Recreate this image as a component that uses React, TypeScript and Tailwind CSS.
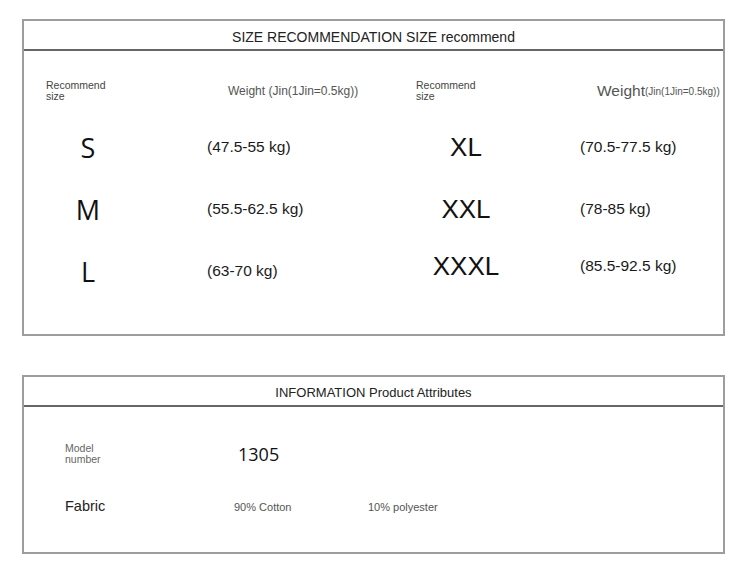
const sans = "font-['Liberation_Sans',Arial,sans-serif]";
const open = "font-['Open_Sans','Noto_Sans',sans-serif]";

const leftRows = [
  { size: 'S', kg: '(47.5-55 kg)', h: 'h-[62px]' },
  { size: 'M', kg: '(55.5-62.5 kg)', h: 'h-[62px]' },
  { size: 'L', kg: '(63-70 kg)', h: 'h-[62px]' },
];

const rightRows = [
  { size: 'XL', kg: '(70.5-77.5 kg)', h: 'h-[62px]' },
  { size: 'XXL', kg: '(78-85 kg)', h: 'h-[62px]' },
  { size: 'XXXL', kg: '(85.5-92.5 kg)', h: 'h-[52px]' },
];

const Label = () => (
  <div className="text-[10.5px] leading-[11px] text-[#444]">
    <div>Recommend</div>
    <div>size</div>
  </div>
);

const App = () => {
  return (
    <div className={`min-h-screen bg-white pt-[19px] pl-[22px] ${sans}`}>
      {/* Size recommendation */}
      <div className="w-[703px] h-[317px] border-2 border-[#9d9d9d] flex flex-col">
        <div className="h-[28px] pt-[5px] flex items-center justify-center text-[14px] text-[#222]">
          SIZE RECOMMENDATION SIZE recommend
        </div>
        <div className="h-[2px] bg-[#666]" />
        <div className="flex pl-[22px]">
          {/* left half */}
          <div className="flex flex-col w-[370px]">
            <div className="flex h-[20px] mt-[30px] items-center">
              <div className="w-[161px]">
                <Label />
              </div>
              <div className="pl-[21px] text-[12px] text-[#555]">Weight (Jin(1Jin=0.5kg))</div>
            </div>
            <div className="mt-[15px] flex flex-col">
              {leftRows.map((r) => (
                <div key={r.size} className={`flex items-center ${r.h}`}>
                  <div className="w-[161px]">
                    <div className={`w-[84px] text-center text-[27px] leading-none text-[#111] ${open}`}>{r.size}</div>
                  </div>
                  <div className="text-[15.5px] text-[#1a1a1a]">{r.kg}</div>
                </div>
              ))}
            </div>
          </div>
          {/* right half */}
          <div className="flex flex-col flex-1">
            <div className="flex h-[20px] mt-[30px] items-center">
              <div className="w-[164px]">
                <Label />
              </div>
              <div className="pl-[17px] flex items-baseline text-[#555]">
                <span className="text-[15.5px]">Weight</span>
                <span className="text-[10px] -translate-y-[1px]">(Jin(1Jin=0.5kg))</span>
              </div>
            </div>
            <div className="mt-[15px] flex flex-col">
              {rightRows.map((r) => (
                <div key={r.size} className={`flex items-center ${r.h}`}>
                  <div className="w-[164px]">
                    <div className="w-[100px] text-center text-[26px] leading-none text-[#111]">{r.size}</div>
                  </div>
                  <div className="text-[15.5px] text-[#1a1a1a]">{r.kg}</div>
                </div>
              ))}
            </div>
          </div>
        </div>
      </div>

      {/* Product attributes */}
      <div className="mt-[39px] w-[703px] h-[179px] border-2 border-[#9d9d9d] flex flex-col">
        <div className="h-[28px] pt-[4px] flex items-center justify-center text-[13px] text-[#222]">
          INFORMATION Product Attributes
        </div>
        <div className="h-[2px] bg-[#666]" />
        <div className="flex flex-col pl-[41px] pt-[30px]">
          <div className="flex items-center h-[34px]">
            <div className="w-[169px] text-[10.5px] leading-[11px] text-[#666]">
              <div>Model</div>
              <div>number</div>
            </div>
            <div className={`pl-[4px] text-[18px] font-medium text-[#111] ${open}`}>1305</div>
          </div>
          <div className="flex items-center h-[38px] mt-[17px]">
            <div className="w-[169px] text-[14.5px] text-[#222]">Fabric</div>
            <div className="w-[134px] text-[11px] text-[#555]">90% Cotton</div>
            <div className="text-[11px] text-[#555]">10% polyester</div>
          </div>
        </div>
      </div>
    </div>
  );
};

export default App;
